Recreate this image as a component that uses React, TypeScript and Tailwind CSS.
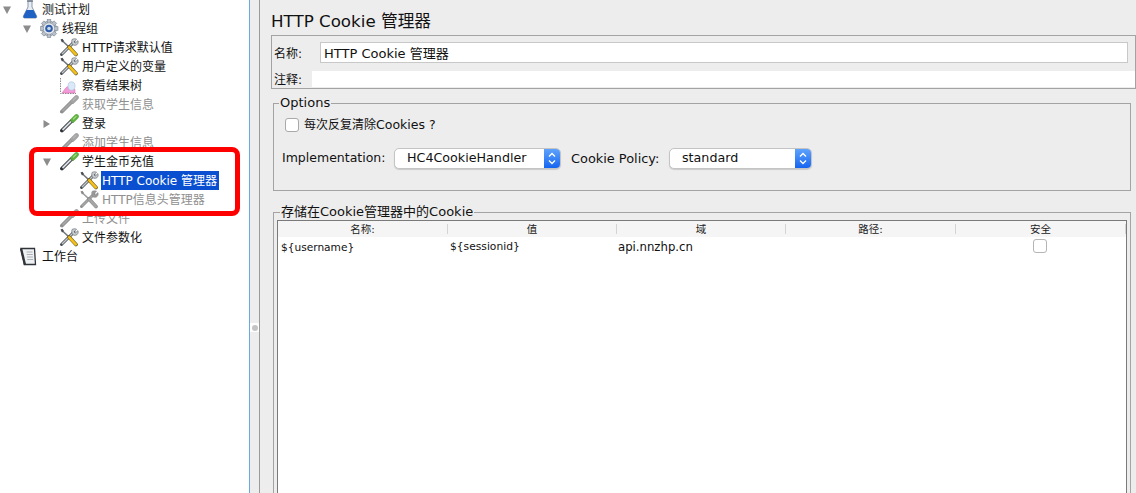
import React from 'react';

const sans = 'font-["DejaVu_Sans","Noto_Sans_CJK_SC",sans-serif]';

const Flask = () => (
  <svg width="20" height="19" viewBox="0 0 20 19">
    <path d="M8 1h4v6l4.500 9c.5 1.200 0 2-1 2h-11c-1 0-1.500-.8-1-2l4.500-9z" fill="#e6edf5" stroke="#8d99a8" strokeWidth="1" />
    <path d="M6.500 10h7l3 6c.4 1 0 2-1 2h-11c-1 0-1.400-1-1-2z" fill="#1f62c4" />
    <path d="M7 1h6" stroke="#6f7a88" strokeWidth="1.500" />
  </svg>
);

const Gear = () => (
  <svg width="20" height="19" viewBox="0 0 20 19">
    <g fill="#b9c0c9" stroke="#7d8792" strokeWidth="0.6" transform="translate(-1 0)">
      <circle cx="10" cy="9.500" r="7.500" />
      <rect x="8.200" y="0.500" width="3.600" height="3.500" />
      <rect x="8.200" y="15" width="3.600" height="3.500" />
      <rect x="1" y="7.700" width="3.500" height="3.600" />
      <rect x="15.500" y="7.700" width="3.500" height="3.600" />
      <rect x="8.200" y="0.500" width="3.600" height="3.500" transform="rotate(45 10 9.500)" />
      <rect x="8.200" y="15" width="3.600" height="3.500" transform="rotate(45 10 9.500)" />
      <rect x="1" y="7.700" width="3.500" height="3.600" transform="rotate(45 10 9.500)" />
      <rect x="15.500" y="7.700" width="3.500" height="3.600" transform="rotate(45 10 9.500)" />
    </g>
    <circle cx="9" cy="9.500" r="5.300" fill="#e8ebef" />
    <circle cx="9" cy="9.500" r="3.800" fill="#2f5fa8" />
    <circle cx="9" cy="9.500" r="1.800" fill="#c9d6ea" />
  </svg>
);

const Tools = ({ off }: { off?: boolean }) => (
  <svg width="20" height="19" viewBox="0 0 20 19" className="-ml-px">
    <path d="M15 4 2.500 16.500" stroke={off ? '#8f8f8f' : '#4a4f55'} strokeWidth="3" strokeLinecap="round" />
    <path d="M15 4 3 16" stroke={off ? '#a8a8a8' : '#c4c9ce'} strokeWidth="1.400" />
    <path d="M13 1.500c1.800-1 3.400-.9 4.600-.2l-2.600 2.500 1.200 1.300 2.700-2.500c.6 1.700.2 3.200-1 4.100-1.200.8-2.700.8-4 .1-1.200-1.500-1.400-3.700-.9-5.300z" fill={off ? '#9a9a9a' : '#c9ced3'} stroke={off ? '#8a8a8a' : '#5a5f65'} strokeWidth="0.600" />
    <path d="M3 2.500 10 9" stroke={off ? '#9a9a9a' : '#70767b'} strokeWidth="1.600" />
    <path d="M1.500 1.500 3.500 .8 5 3 3 4.500z" fill={off ? '#8a8a8a' : '#4a4e52'} />
    <path d="M10 9 17 16.500" stroke={off ? '#8a8a8a' : '#6b5a20'} strokeWidth="3.600" strokeLinecap="round" />
    <path d="M10.300 9.300 16.800 16.300" stroke={off ? '#a6a6a6' : '#f5c21a'} strokeWidth="2.600" strokeLinecap="round" />
  </svg>
);

const Chart = () => (
  <svg width="20" height="19" viewBox="0 0 20 19">
    <path d="M.500 2v15.500H16" fill="none" stroke="#8a8a8a" strokeWidth="1" strokeDasharray="1.500 1" />
    <path d="M2 17l3-4c2-3 4-3 6-1 1.500 1 3 1 4 1.500V17z" fill="#f39bd6" stroke="#d56bb4" strokeWidth="0.500" />
    <ellipse cx="11.500" cy="10" rx="3.500" ry="4.200" fill="#dbe8f8" stroke="#a9bfdc" strokeWidth="0.600" />
  </svg>
);

const Pipette = ({ off }: { off?: boolean }) => (
  <svg width="20" height="19" viewBox="0 0 20 19" className="-ml-px">
    <path d="M1 18c.5-.7 1-.9 2-1" fill="none" stroke="#9a9a9a" strokeWidth="0.800" />
    <path d="M3 16.500 12 7.500" stroke={off ? '#8e8e8e' : '#2f3338'} strokeWidth="3.800" strokeLinecap="round" />
    <path d="M3.500 16 12 7.500" stroke={off ? '#a5a5a5' : '#d5dadf'} strokeWidth="1.800" />
    <path d="M11.500 5.500 14.500 8.500" stroke={off ? '#8e8e8e' : '#4d6b3a'} strokeWidth="1.800" />
    <path d="M14 6 17.500 2.500" stroke={off ? '#a3a3a3' : '#5fb041'} strokeWidth="4.600" strokeLinecap="round" />
    <path d="M14.500 5 17 2.500" stroke={off ? '#b5b5b5' : '#9ad97f'} strokeWidth="1.400" strokeLinecap="round" />
  </svg>
);

const Notebook = () => (
  <svg width="20" height="19" viewBox="0 0 20 19">
    <path d="M1 1.500h13.500l1 16H4.500z" fill="#eef0f2" stroke="#30343a" strokeWidth="1.300" />
    <path d="M1 1.500 5 18" stroke="#30343a" strokeWidth="2.400" />
    <path d="M6.500 5h6M6.800 7.500h6M7 10h6M7.200 12.500h6" stroke="#9aa1a9" strokeWidth="0.800" />
  </svg>
);

const Arrow = ({ open }: { open: boolean }) => (
  <svg width="10" height="10" viewBox="0 0 10 10">
    <path d={open ? 'M1 1.500h8L5 9z' : 'M1.500 1v8L8 5z'} fill="#8c8c8c" />
  </svg>
);

const Row = ({ pad, arrow, icon, label, off, selected }: { pad: string; arrow?: 'open' | 'closed'; icon: React.ReactNode; label: string; off?: boolean; selected?: boolean }) => (
  <div className={`flex h-[19px] items-center ${pad}`}>
    <span className="flex w-[18px] shrink-0 items-center">{arrow && <Arrow open={arrow === 'open'} />}</span>
    <span className="w-[20px] shrink-0">{icon}</span>
    <span className={`ml-[1px] h-[19px] whitespace-nowrap pr-[2px] pl-[1px] text-[12px] leading-[21px] ${off ? 'text-[#8f8f8f]' : selected ? 'bg-[#0b4fd1] text-white' : 'text-[#111]'}`}>{label}</span>
  </div>
);

const Tree = () => (
  <div className="relative h-full w-[249px] shrink-0 bg-white">
    <Row pad="pl-[2px]" arrow="open" icon={<Flask />} label="测试计划" />
    <Row pad="pl-[22px]" arrow="open" icon={<Gear />} label="线程组" />
    <Row pad="pl-[42px]" icon={<Tools />} label="HTTP请求默认值" />
    <Row pad="pl-[42px]" icon={<Tools />} label="用户定义的变量" />
    <Row pad="pl-[42px]" icon={<Chart />} label="察看结果树" />
    <Row pad="pl-[42px]" icon={<Pipette off />} label="获取学生信息" off />
    <Row pad="pl-[42px]" arrow="closed" icon={<Pipette />} label="登录" />
    <Row pad="pl-[42px]" icon={<Pipette off />} label="添加学生信息" off />
    <Row pad="pl-[42px]" arrow="open" icon={<Pipette />} label="学生金币充值" />
    <Row pad="pl-[62px]" icon={<Tools />} label="HTTP Cookie 管理器" selected />
    <Row pad="pl-[62px]" icon={<Tools off />} label="HTTP信息头管理器" off />
    <Row pad="pl-[42px]" icon={<Pipette off />} label="上传文件" off />
    <Row pad="pl-[42px]" icon={<Tools />} label="文件参数化" />
    <Row pad="pl-[2px]" icon={<Notebook />} label="工作台" />
    <div className="absolute top-[147px] left-[29px] h-[69px] w-[211px] rounded-[8px] border-[5px] border-[#fe0000]" />
  </div>
);

const Select = ({ width, value }: { width: string; value: string }) => (
  <div className={`flex h-[21px] ${width} items-stretch overflow-hidden rounded-[5px] border border-[#c4c4c4] bg-white shadow-[0_1px_1px_rgba(0,0,0,0.15)]`}>
    <span className="flex-1 pl-[12px] text-[12.700px] leading-[18px] text-[#111]">{value}</span>
    <span className="flex w-[16px] items-center justify-center bg-gradient-to-b from-[#5ea2fb] to-[#1464f0]">
      <svg width="10" height="15" viewBox="0 0 10 15">
        <path d="M2 5.500 5 2.500l3 3M2 9.500l3 3 3-3" fill="none" stroke="#fff" strokeWidth="1.300" />
      </svg>
    </span>
  </div>
);

const columns = [
  { name: '名称:', width: 'w-[170px]' },
  { name: '值', width: 'w-[169px]' },
  { name: '域', width: 'w-[169px]' },
  { name: '路径:', width: 'w-[170px]' },
  { name: '安全', width: 'w-[170px]' },
];

const CookieTable = () => (
  <div className="mt-[1px] h-[400px] border-t border-l border-r border-[#7a7a7a] bg-white">
    <div className="flex h-[16px] bg-[#f5f5f5] text-[#222]">
      {columns.map((c) => (
        <div key={c.name} className={`${c.width} my-[3px] flex items-center justify-center border-r border-[#d4d4d4] text-[10.500px] leading-[10px]`}>{c.name}</div>
      ))}
    </div>
    <div className="flex h-[17px] items-center pt-[4px] text-[#111]">
      <span className="w-[170px] pl-[3px] text-[10.600px]">{'${username}'}</span>
      <span className="w-[169px] pl-[2px] text-[10.700px]">{'${sessionid}'}</span>
      <span className="w-[169px] pl-[1px] text-[11.700px]">api.nnzhp.cn</span>
      <span className="w-[170px]" />
      <span className="-mt-[4px] flex w-[170px] justify-center pr-[2px]">
        <span className="h-[14px] w-[14px] rounded-[3px] border border-[#b5b5b5] bg-white" />
      </span>
    </div>
  </div>
);

const Panel = () => (
  <div className="min-w-0 flex-1 pt-[11px] pl-[11px]">
    <h1 className="h-[24px] text-[16.700px] leading-[20px] font-normal text-[#111]">HTTP Cookie 管理器</h1>
    <div className="h-[54px] border border-[#a3a3a3] pt-[6px] pl-[2px] text-[12px] text-[#111]">
      <div className="flex h-[21px] items-center">
        <span className="w-[46px] pt-[2px]">名称:</span>
        <div className="flex h-[21px] w-[808px] items-center border border-[#c8c8c8] bg-white pt-[2px] pl-[3px] text-[13px]">HTTP Cookie 管理器</div>
      </div>
      <div className="mt-[8px] flex h-[16px] items-center">
        <span className="w-[38px] pt-[2px]">注释:</span>
        <div className="h-[16px] flex-1 bg-white" />
      </div>
    </div>
    <fieldset className="mt-[7px] ml-[2px] h-[95px] w-[858px] border border-[#a3a3a3] px-[8px] text-[12.500px] text-[#111]">
      <legend className="ml-[-3px] px-[1px] text-[13px] leading-[14px]">Options</legend>
      <div className="flex items-center pt-[6px] pl-[3px]">
        <span className="h-[14px] w-[14px] rounded-[3px] border border-[#a9a9a9] bg-white" />
        <span className="ml-[5px]"><span className="text-[12px]">每次反复清除</span>Cookies ?</span>
      </div>
      <div className="mt-[13px] flex items-center">
        <span className="w-[112px]">Implementation:</span>
        <Select width="w-[167px]" value="HC4CookieHandler" />
        <span className="ml-[10px] w-[98px] text-[12.900px]">Cookie Policy:</span>
        <Select width="w-[143px]" value="standard" />
      </div>
    </fieldset>
    <fieldset className="mt-[14px] ml-[2px] h-[400px] w-[858px] border border-[#a3a3a3] px-[3px] text-[12px]">
      <legend className="ml-[3px] px-[1px] text-[13px] leading-[14px] text-[#111]">存储在Cookie管理器中的Cookie</legend>
      <CookieTable />
    </fieldset>
  </div>
);

export default function App() {
  return (
    <div className={`flex h-[493px] w-[1136px] overflow-hidden bg-[#ededed] ${sans}`}>
      <Tree />
      <div className="w-[1px] shrink-0 bg-[#6aa9e0]" />
      <div className="relative w-[9px] shrink-0">
        <div className="absolute top-[323px] left-0 flex h-[9px] w-[9px] items-center justify-center bg-white">
          <span className="h-[6px] w-[6px] rounded-full bg-[#c4c4c4]" />
        </div>
      </div>
      <div className="w-[1px] shrink-0 bg-[#9a9a9a]" />
      <Panel />
    </div>
  );
}
